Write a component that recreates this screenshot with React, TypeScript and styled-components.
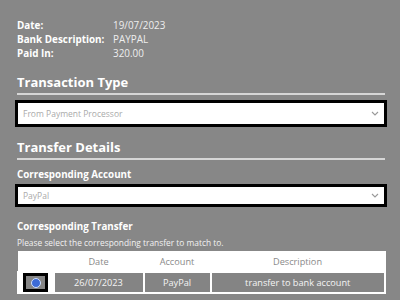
import styled, { createGlobalStyle } from "styled-components";

const Global = createGlobalStyle`
    html, body {
        margin: 0;
        padding: 0;
        background: #878787;
    }
    body {
        font-family: "Open Sans", "Liberation Sans", sans-serif;
        color: #fff;
    }
`;

const ChevronDown = () => (
    <svg width="8" height="5" viewBox="0 0 8 5" fill="none">
        <path d="M1 1l3 3 3-3" stroke="#999" strokeWidth="1.1" />
    </svg>
);

export default function App() {
    return (
        <>
            <Global />
            <Page>
                <Summary>
                    <Label>Date:</Label>
                    <Value>19/07/2023</Value>
                    <Label>Bank Description:</Label>
                    <Value>PAYPAL</Value>
                    <Label>Paid In:</Label>
                    <Value>320.00</Value>
                </Summary>

                <Heading>Transaction Type</Heading>
                <Select>
                    <span>From Payment Processor</span>
                    <ChevronDown />
                </Select>

                <Heading $top={11}>Transfer Details</Heading>
                <FieldLabel $top={8}>Corresponding Account</FieldLabel>
                <Select $small>
                    <span>PayPal</span>
                    <ChevronDown />
                </Select>

                <FieldLabel $top={13}>Corresponding Transfer</FieldLabel>
                <Hint>Please select the corresponding transfer to match to.</Hint>
                <Table>
                    <thead>
                        <tr>
                            <Th $w={35}></Th>
                            <Th $w={90}>Date</Th>
                            <Th $w={67}>Account</Th>
                            <Th>Description</Th>
                        </tr>
                    </thead>
                    <tbody>
                        <tr>
                            <RadioCell>
                                <Radio />
                            </RadioCell>
                            <Td>26/07/2023</Td>
                            <Td>PayPal</Td>
                            <Td>transfer to bank account</Td>
                        </tr>
                    </tbody>
                </Table>
            </Page>
        </>
    );
}

const Page = styled.div`
    width: 400px;
    height: 300px;
    overflow: hidden;
    padding: 18px 15px 0 17px;
    box-sizing: border-box;
`;

const Summary = styled.div`
    display: grid;
    grid-template-columns: 96px 1fr;
    font-size: 9.9px;
    line-height: 14px;
`;

const Label = styled.div`
    font-weight: 700;
    color: #fff;
`;

const Value = styled.div`
    color: #eee;
`;

const Heading = styled.h2<{ $top?: number }>`
    margin: ${(p) => p.$top ?? 13}px 0 5px 0;
    padding-bottom: 2px;
    font-size: 13px;
    line-height: 18px;
    font-weight: 700;
    color: #fff;
    border-bottom: 2px solid #d6d6d6;
`;

const Select = styled.div<{ $small?: boolean }>`
    display: flex;
    align-items: center;
    justify-content: space-between;
    margin: 0 -2px;
    height: ${(p) => (p.$small ? 23 : 27)}px;
    box-sizing: border-box;
    padding: 0 5px 0 5px;
    background: #fff;
    border: 3px solid #000;
    font-size: 8.5px;
    color: #aaa;
`;

const FieldLabel = styled.div<{ $top: number }>`
    margin-top: ${(p) => p.$top}px;
    margin-bottom: 2px;
    font-size: 9.8px;
    line-height: 14px;
    font-weight: 700;
    color: #fff;
`;

const Hint = styled.div`
    margin-top: 3px;
    margin-bottom: 3px;
    font-size: 8.4px;
    line-height: 11px;
    color: #f2f2f2;
`;

const Table = styled.table`
    width: 369px;
    border-collapse: collapse;
    border: 1px solid #fff;
    font-size: 9.2px;
    text-align: center;
`;

const Th = styled.th<{ $w?: number }>`
    width: ${(p) => (p.$w ? `${p.$w}px` : "auto")};
    height: 19px;
    padding: 0;
    background: #fff;
    color: #8a8a8a;
    font-weight: 400;
`;

const Td = styled.td`
    height: 17px;
    padding: 0;
    background: #848484;
    color: #f4f4f4;
    border: 2px solid #fff;
`;

const RadioCell = styled(Td)`
    background: #fff;
    padding: 0 4px;
`;

const Radio = styled.div`
    margin: 0 auto;
    width: 25px;
    height: 19px;
    box-sizing: border-box;
    background: #858585;
    border: 3px solid #000;
    display: flex;
    align-items: center;
    justify-content: center;
    &::after {
        content: "";
        width: 8px;
        height: 8px;
        border-radius: 50%;
        background: #3d6bd6;
        border: 1.5px solid #cfe0ff;
    }
`;
